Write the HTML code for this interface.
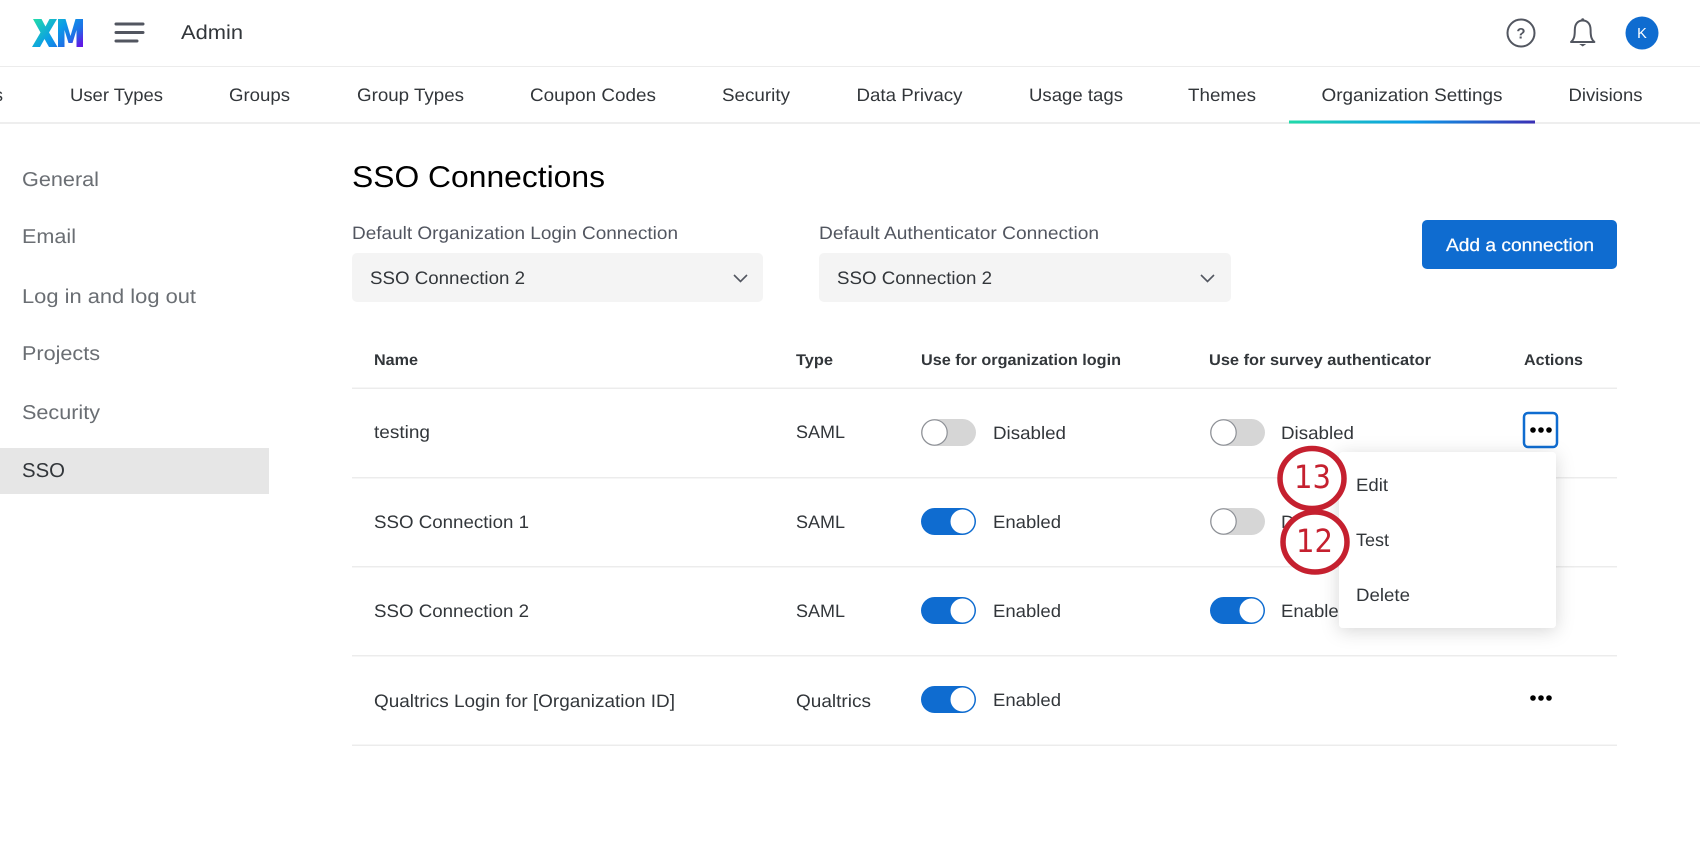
<!DOCTYPE html>
<html><head><meta charset="utf-8"><title>SSO Connections</title>
<style>
html,body{margin:0;padding:0;background:#fff;width:1700px;height:846px;overflow:hidden}
svg{display:block}
text{font-family:"Liberation Sans",sans-serif;white-space:pre}
.n{font-size:18px;fill:#32363a}
.s{font-size:20px;fill:#6a6e73}
.h{font-size:15.5px;font-weight:bold;fill:#32363a}
.l{font-size:18px;fill:#525660}
.c{font-size:32px;fill:#c5202f;font-family:"DejaVu Sans",sans-serif}
</style></head><body>
<svg xmlns="http://www.w3.org/2000/svg" width="1700" height="846" viewBox="0 0 1700 846" text-rendering="geometricPrecision">
<defs>
<linearGradient id="lg" gradientUnits="userSpaceOnUse" x1="38" y1="15" x2="74" y2="51"><stop offset="0" stop-color="#21dbaa"/><stop offset=".5" stop-color="#0b9be8"/><stop offset=".78" stop-color="#1f6fe6"/><stop offset="1" stop-color="#5f1ae5"/></linearGradient>
<linearGradient id="tg" gradientUnits="userSpaceOnUse" x1="1289" y1="0" x2="1535" y2="0"><stop offset="0" stop-color="#21dbaa"/><stop offset=".5" stop-color="#0b9be8"/><stop offset="1" stop-color="#3a2fb5"/></linearGradient>
<g id="on"><rect x="0" y="0" width="55" height="27" rx="13.5" fill="#0f6cd0"/><circle cx="41.5" cy="13.5" r="12.5" fill="#fff" stroke="#0f6cd0" stroke-width="1"/></g>
<g id="off"><rect x="0" y="0" width="55" height="27" rx="13.5" fill="#d6d6d6"/><circle cx="13.5" cy="13.5" r="12.7" fill="#fff" stroke="#8d9096" stroke-width="1.2"/></g>
<filter id="sh" x="-20%" y="-20%" width="140%" height="150%"><feDropShadow dx="0" dy="3" stdDeviation="9" flood-color="#000" flood-opacity=".16"/></filter>
</defs>

<!-- header -->
<path fill="url(#lg)" d="M33 19h8.500l4 7.500 4-7.500h7.500l-8 13.500 8.500 14.500h-8.500l-4.500-8-4.500 8H32l8.500-14.500z"/>
<path fill="url(#lg)" d="M58 47V19h7.500l5 17 5-17H83v28h-6.500V30l-4 13h-4l-4-13v17z"/>
<path d="M116 24h27M116 32.500h27M116 41h21" stroke="#525660" stroke-width="3" stroke-linecap="round" fill="none"/>
<text x="181" y="39" font-size="20" fill="#32363a" textLength="62" lengthAdjust="spacingAndGlyphs">Admin</text>
<circle cx="1521" cy="33" r="13.500" fill="none" stroke="#525660" stroke-width="2"/>
<text x="1521" y="38.500" font-size="15" font-weight="bold" fill="#525660" text-anchor="middle">?</text>
<path d="M1571 42c3-2.500 3.800-5.500 3.800-12 0-6 3-9.500 7.900-9.500s7.900 3.500 7.900 9.500c0 6.500.8 9.500 3.800 12z" fill="none" stroke="#525660" stroke-width="2" stroke-linejoin="round"/>
<circle cx="1582.700" cy="19.800" r="1.500" fill="#525660"/>
<path d="M1579.200 44h7l-3.500 2.500z" fill="#525660"/>
<circle cx="1642" cy="33" r="16.500" fill="#0f6cd0"/>
<text x="1642" y="38" font-size="14.500" fill="#fff" text-anchor="middle">K</text>
<rect x="0" y="66" width="1700" height="1" fill="#ececec"/>

<!-- tabs -->
<rect x="0" y="122" width="1700" height="2" fill="#eeeeee"/>
<rect x="1289" y="120.500" width="246" height="3" fill="url(#tg)"/>
<g class="tabs">
<text class="n" x="-6" y="101" textLength="9" lengthAdjust="spacingAndGlyphs">s</text>
<text class="n" x="70" y="101" textLength="93" lengthAdjust="spacingAndGlyphs">User Types</text>
<text class="n" x="229" y="101" textLength="61" lengthAdjust="spacingAndGlyphs">Groups</text>
<text class="n" x="357" y="101" textLength="107" lengthAdjust="spacingAndGlyphs">Group Types</text>
<text class="n" x="530" y="101" textLength="126" lengthAdjust="spacingAndGlyphs">Coupon Codes</text>
<text class="n" x="722" y="101" textLength="68" lengthAdjust="spacingAndGlyphs">Security</text>
<text class="n" x="856.500" y="101" textLength="106" lengthAdjust="spacingAndGlyphs">Data Privacy</text>
<text class="n" x="1029" y="101" textLength="94" lengthAdjust="spacingAndGlyphs">Usage tags</text>
<text class="n" x="1188" y="101" textLength="68" lengthAdjust="spacingAndGlyphs">Themes</text>
<text class="n" x="1321.500" y="101" textLength="181" lengthAdjust="spacingAndGlyphs">Organization Settings</text>
<text class="n" x="1568.500" y="101" textLength="74" lengthAdjust="spacingAndGlyphs">Divisions</text>
</g>

<!-- sidebar -->
<rect x="0" y="448" width="269" height="46" fill="#e6e6e6"/>
<text class="s" x="22" y="186" textLength="77" lengthAdjust="spacingAndGlyphs">General</text>
<text class="s" x="22" y="243" textLength="54" lengthAdjust="spacingAndGlyphs">Email</text>
<text class="s" x="22" y="303" textLength="174" lengthAdjust="spacingAndGlyphs">Log in and log out</text>
<text class="s" x="22" y="360" textLength="78" lengthAdjust="spacingAndGlyphs">Projects</text>
<text class="s" x="22" y="419" textLength="78" lengthAdjust="spacingAndGlyphs">Security</text>
<text class="s" x="22" y="477" textLength="43" lengthAdjust="spacingAndGlyphs" style="fill:#32363a">SSO</text>

<!-- title & controls -->
<text x="352" y="187" font-size="30" fill="#000" textLength="253" lengthAdjust="spacingAndGlyphs">SSO Connections</text>
<text class="l" x="352" y="239" textLength="326" lengthAdjust="spacingAndGlyphs">Default Organization Login Connection</text>
<text class="l" x="819" y="239" textLength="280" lengthAdjust="spacingAndGlyphs">Default Authenticator Connection</text>
<rect x="352" y="253" width="411" height="49" rx="5" fill="#f4f4f4"/>
<rect x="819" y="253" width="412" height="49" rx="5" fill="#f4f4f4"/>
<text class="n" x="370" y="284" textLength="155" lengthAdjust="spacingAndGlyphs">SSO Connection 2</text>
<text class="n" x="837" y="284" textLength="155" lengthAdjust="spacingAndGlyphs">SSO Connection 2</text>
<path d="M734 275l6.500 6.500 6.500-6.500M1201 275l6.500 6.500 6.500-6.500" fill="none" stroke="#525660" stroke-width="1.600"/>
<rect x="1422" y="220" width="195" height="49" rx="5" fill="#0f6cd0"/>
<text x="1446" y="251" font-size="18" fill="#fff" stroke="#fff" stroke-width=".25" textLength="148" lengthAdjust="spacingAndGlyphs">Add a connection</text>

<!-- table -->
<text class="h" x="374" y="365" textLength="44" lengthAdjust="spacingAndGlyphs">Name</text>
<text class="h" x="796" y="365" textLength="37" lengthAdjust="spacingAndGlyphs">Type</text>
<text class="h" x="921" y="365" textLength="200" lengthAdjust="spacingAndGlyphs">Use for organization login</text>
<text class="h" x="1209" y="365" textLength="222" lengthAdjust="spacingAndGlyphs">Use for survey authenticator</text>
<text class="h" x="1524" y="365" textLength="59" lengthAdjust="spacingAndGlyphs">Actions</text>
<g fill="#ececec">
<rect x="352" y="387.500" width="1265" height="1.500"/>
<rect x="352" y="477" width="1265" height="1.500"/>
<rect x="352" y="566" width="1265" height="1.500"/>
<rect x="352" y="655" width="1265" height="1.500"/>
<rect x="352" y="744.500" width="1265" height="1.500"/>
</g>

<text class="n" x="374" y="438" textLength="56" lengthAdjust="spacingAndGlyphs">testing</text>
<text class="n" x="796" y="438" textLength="49" lengthAdjust="spacingAndGlyphs">SAML</text>
<use href="#off" x="921" y="419"/>
<text class="n" x="993" y="439" textLength="73" lengthAdjust="spacingAndGlyphs">Disabled</text>
<use href="#off" x="1210" y="419"/>
<text class="n" x="1281" y="439" textLength="73" lengthAdjust="spacingAndGlyphs">Disabled</text>

<text class="n" x="374" y="528" textLength="155" lengthAdjust="spacingAndGlyphs">SSO Connection 1</text>
<text class="n" x="796" y="528" textLength="49" lengthAdjust="spacingAndGlyphs">SAML</text>
<use href="#on" x="921" y="508"/>
<text class="n" x="993" y="528" textLength="68" lengthAdjust="spacingAndGlyphs">Enabled</text>
<use href="#off" x="1210" y="508"/>
<text class="n" x="1281" y="528" textLength="73" lengthAdjust="spacingAndGlyphs">Disabled</text>

<text class="n" x="374" y="617" textLength="155" lengthAdjust="spacingAndGlyphs">SSO Connection 2</text>
<text class="n" x="796" y="617" textLength="49" lengthAdjust="spacingAndGlyphs">SAML</text>
<use href="#on" x="921" y="597"/>
<text class="n" x="993" y="617" textLength="68" lengthAdjust="spacingAndGlyphs">Enabled</text>
<use href="#on" x="1210" y="597"/>
<text class="n" x="1281" y="617" textLength="68" lengthAdjust="spacingAndGlyphs">Enabled</text>

<text class="n" x="374" y="707" textLength="301" lengthAdjust="spacingAndGlyphs">Qualtrics Login for [Organization ID]</text>
<text class="n" x="796" y="707" textLength="75" lengthAdjust="spacingAndGlyphs">Qualtrics</text>
<use href="#on" x="921" y="686"/>
<text class="n" x="993" y="706" textLength="68" lengthAdjust="spacingAndGlyphs">Enabled</text>
<g fill="#000"><circle cx="1533" cy="698" r="2.800"/><circle cx="1541" cy="698" r="2.800"/><circle cx="1549" cy="698" r="2.800"/></g>

<!-- action button -->
<rect x="1524" y="413" width="33" height="34" rx="4" fill="#fff" stroke="#0f6cd0" stroke-width="2.500"/>
<g fill="#000"><circle cx="1533" cy="430" r="2.800"/><circle cx="1541" cy="430" r="2.800"/><circle cx="1549" cy="430" r="2.800"/></g>

<!-- menu -->
<rect x="1339" y="452" width="217" height="176" rx="4" fill="#fff" filter="url(#sh)"/>
<text class="n" x="1356" y="491" textLength="32" lengthAdjust="spacingAndGlyphs">Edit</text>
<text class="n" x="1356" y="546" textLength="33" lengthAdjust="spacingAndGlyphs">Test</text>
<text class="n" x="1356" y="601" textLength="54" lengthAdjust="spacingAndGlyphs">Delete</text>

<!-- callouts -->
<ellipse cx="1312" cy="478.500" rx="32" ry="30" fill="#fff" stroke="#c5202f" stroke-width="5.500"/>
<text class="c" x="1294" y="488" textLength="37" lengthAdjust="spacingAndGlyphs">13</text>
<ellipse cx="1315" cy="542" rx="32" ry="30" fill="#fff" stroke="#c5202f" stroke-width="5.500"/>
<text class="c" x="1296" y="552" textLength="37" lengthAdjust="spacingAndGlyphs">12</text>
</svg>
</body></html>
